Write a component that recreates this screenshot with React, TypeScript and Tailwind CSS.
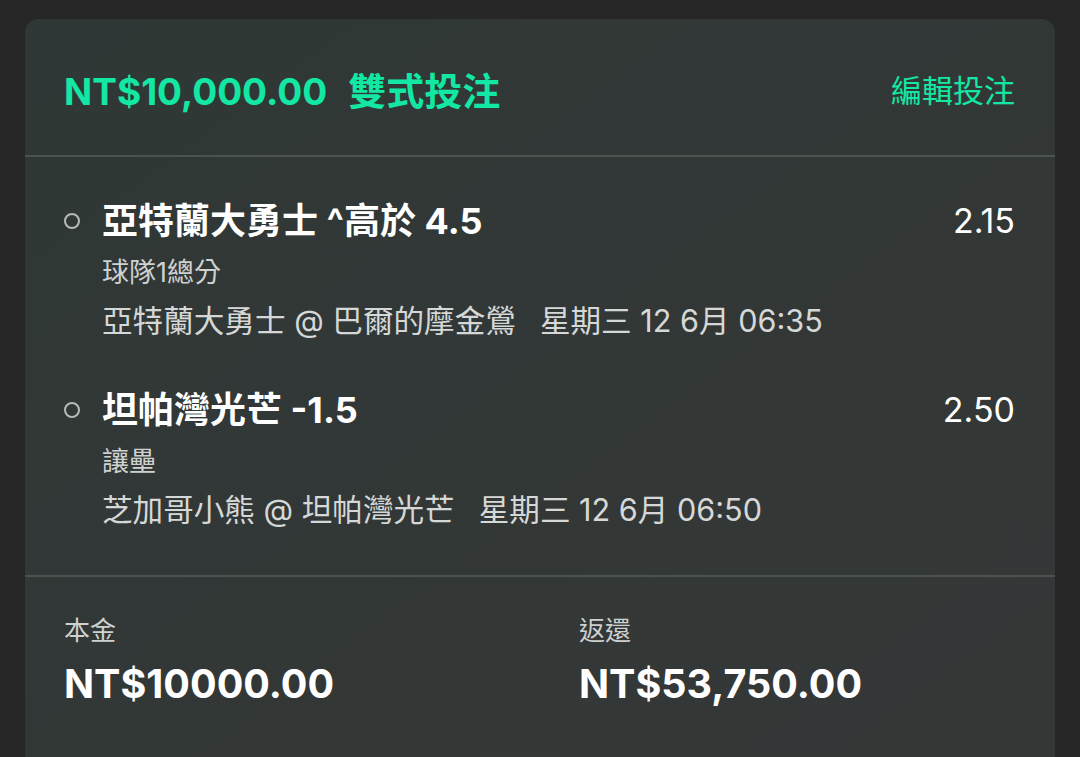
import React from "react";

const FONT = { fontFamily: 'Inter, "Noto Sans CJK TC", "Noto Sans", sans-serif' };

type Leg = {
  title: string;
  odds: string;
  market: string;
  event: string;
  time: string;
};

const legs: Leg[] = [
  {
    title: "亞特蘭大勇士 ^高於 4.5",
    odds: "2.15",
    market: "球隊1總分",
    event: "亞特蘭大勇士 @ 巴爾的摩金鶯",
    time: "星期三 12 6月 06:35",
  },
  {
    title: "坦帕灣光芒 -1.5",
    odds: "2.50",
    market: "讓壘",
    event: "芝加哥小熊 @ 坦帕灣光芒",
    time: "星期三 12 6月 06:50",
  },
];

function LegRow({ leg }: { leg: Leg }) {
  return (
    <div className="flex flex-col">
      <div className="flex items-center h-[50px]">
        <div className="w-[16px] h-[16px] rounded-full border-2 border-[#b8bab9] shrink-0" />
        <div className="ml-[22px] text-[36px] font-bold text-white leading-[50px] flex-1">
          {leg.title}
        </div>
        <div className="text-[34px] text-white leading-[50px]">{leg.odds}</div>
      </div>
      <div className="pl-[38px] text-[27px] leading-[50px] text-[#cfd1d0] pt-[2px]">{leg.market}</div>
      <div className="pl-[38px] text-[30.6px] leading-[46px] text-[#d6d8d7] flex">
        <span>{leg.event}</span>
        <span className="ml-[24px]">{leg.time}</span>
      </div>
    </div>
  );
}

export default function App() {
  return (
    <div className="w-[1080px] h-[757px] overflow-hidden bg-[#262626]" style={FONT}>
      <div className="mx-[25px] mt-[19px] h-[760px] rounded-t-[14px] bg-gradient-to-br from-[#2f3836] to-[#353737]">
        <div className="h-[136px] pt-[9px] px-[39px] pr-[40px] flex items-center">
          <div className="flex-1 flex items-center text-[#12e8a4] font-bold text-[37px]">
            <span>NT$10,000.00</span>
            <span className="ml-[21px] text-[38px]">雙式投注</span>
          </div>
          <div className="text-[#12e8a4] text-[31px]">編輯投注</div>
        </div>
        <div className="h-[2px] bg-[#4b5250]" />
        <div className="pt-[39px] pb-[42px] pl-[39px] pr-[40px] flex flex-col gap-[41px]">
          {legs.map((l, i) => (
            <LegRow key={i} leg={l} />
          ))}
        </div>
        <div className="h-[2px] bg-[#4b5250]" />
        <div className="grid grid-cols-2 pt-[36px]">
          <div className="pl-[39px] flex flex-col gap-[10px]">
            <div className="text-[26px] leading-[36px] text-[#cfd1d0]">本金</div>
            <div className="text-[39.5px] leading-[50px] font-bold text-white">NT$10000.00</div>
          </div>
          <div className="pl-[39px] flex flex-col gap-[10px]">
            <div className="text-[26px] leading-[36px] text-[#cfd1d0]">返還</div>
            <div className="text-[39.5px] leading-[50px] font-bold text-white">NT$53,750.00</div>
          </div>
        </div>
      </div>
    </div>
  );
}
